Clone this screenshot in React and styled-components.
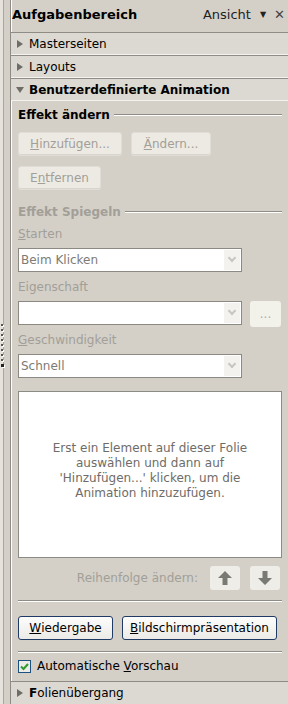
import styled, { createGlobalStyle } from "styled-components"

const GlobalStyle = createGlobalStyle`
  html, body {
    margin: 0;
    padding: 0;
    background: #d4d0c8;
  }
  body {
    font-family: "DejaVu Sans", sans-serif;
    font-size: 12px;
    color: #000;
  }
`

export default function App() {
  return (
    <Frame>
      <GlobalStyle />
      <Grip>
        <Dots>
          {Array.from({ length: 9 }).map((_, i) => <Dot key={i} />)}
        </Dots>
      </Grip>
      <Pane>
        <TitleBar>
          <h1>Aufgabenbereich</h1>
          <span>Ansicht</span>
          <DropArrow>▼</DropArrow>
          <Close>✕</Close>
        </TitleBar>

        <SectionRow><Triangle /><span>Masterseiten</span></SectionRow>
        <SectionRow><Triangle /><span>Layouts</span></SectionRow>
        <SectionRow bold><Triangle open /><span>Benutzerdefinierte Animation</span></SectionRow>

        <Body>
          <GroupTitle below={9}>Effekt ändern</GroupTitle>
          <ButtonRow below={10}>
            <FlatButton w={104}><u>H</u>inzufügen...</FlatButton>
            <FlatButton w={80}><u>Ä</u>ndern...</FlatButton>
          </ButtonRow>
          <ButtonRow below={14}>
            <FlatButton w={83}>E<u>n</u>tfernen</FlatButton>
          </ButtonRow>

          <GroupTitle disabled below={7}>Effekt Spiegeln</GroupTitle>
          <FieldLabel><u>S</u>tarten</FieldLabel>
          <SelectRow below={8}>
            <Select>Beim Klicken<Chevron /></Select>
          </SelectRow>
          <FieldLabel>Eigenschaft</FieldLabel>
          <SelectRow below={6}>
            <Select>&nbsp;<Chevron /></Select>
            <DotsButton>...</DotsButton>
          </SelectRow>
          <FieldLabel><u>G</u>eschwindigkeit</FieldLabel>
          <SelectRow below={13}>
            <Select>Schnell<Chevron /></Select>
          </SelectRow>

          <ListBox>
            <p>Erst ein Element auf dieser Folie auswählen und dann auf 'Hinzufügen...' klicken, um die Animation hinzuzufügen.</p>
          </ListBox>

          <OrderRow>
            <span>Reihenfolge ändern:</span>
            <ArrowButton>
              <svg width="16" height="16" viewBox="0 0 16 16">
                <path d="M8 1 L15 8 L10.5 8 L10.5 15 L5.5 15 L5.5 8 L1 8 Z" fill="#7a7a74" />
              </svg>
            </ArrowButton>
            <ArrowButton>
              <svg width="16" height="16" viewBox="0 0 16 16">
                <path d="M8 15 L15 8 L10.5 8 L10.5 1 L5.5 1 L5.5 8 L1 8 Z" fill="#7a7a74" />
              </svg>
            </ArrowButton>
          </OrderRow>

          <Separator below={14} />
          <ButtonRow below={11}>
            <XpButton w={95}><u>W</u>iedergabe</XpButton>
            <XpButton w={155}><u>B</u>ildschirmpräsentation</XpButton>
          </ButtonRow>
          <Separator below={6} />

          <CheckRow>
            <CheckBox>
              <svg width="9" height="9" viewBox="0 0 9 9">
                <path d="M1 4.5 L3.5 7 L8 2" stroke="#2f9a2f" strokeWidth="2" fill="none" />
              </svg>
            </CheckBox>
            <span>Automatische <u>V</u>orschau</span>
          </CheckRow>
        </Body>

        <SectionRow last><Triangle /><span><b>F</b>olienübergang</span></SectionRow>
      </Pane>
    </Frame>
  )
}

const Frame = styled.div`
  display: flex;
  height: 704px;
  width: 288px;
  overflow: hidden;
`
const Grip = styled.div`
  width: 10px;
  border-right: 1px solid #8d8b86;
  box-shadow: inset 3px 0 0 #e6e3dd, inset 4px 0 0 #a9a69f;
  display: flex;
  align-items: center;
  flex-shrink: 0;
`
const Dots = styled.div`
  display: flex;
  flex-direction: column;
  gap: 3px;
  margin-left: 1px;
  margin-top: -14px;
`
const Dot = styled.div`
  width: 2px;
  height: 2px;
  background: #555;
  box-shadow: 1px 1px 0 #fff;
  &:last-child {
    width: 3px;
    height: 3px;
    background: #222;
  }
`
const Pane = styled.div`
  flex: 1;
  display: flex;
  flex-direction: column;
  box-shadow: inset 1px 0 0 #fff;
  min-width: 0;
  overflow: hidden;
  & > * {
    flex-shrink: 0;
  }
`
const TitleBar = styled.div`
  height: 32px;
  display: flex;
  align-items: center;
  padding: 0 3px 4px 1px;
  box-sizing: border-box;
  h1 {
    margin: 0;
    flex: 1;
    font-size: 13px;
    font-weight: bold;
  }
  span {
    font-size: 13px;
    color: #222;
  }
`
const DropArrow = styled.div`
  font-size: 8px;
  margin: 0 8px 0 9px;
  color: #222;
`
const Close = styled.div`
  font-size: 13px;
  font-weight: bold;
  color: #444;
`
const SectionRow = styled.div`
  display: flex;
  align-items: center;
  gap: 5px;
  padding-left: 5px;
  background: #dcd9d2;
  border-top: 1px solid #8f8c86;
  border-bottom: ${(p) => (p.last ? "none" : "1px solid #f4f2ee")};
  box-sizing: ${(p) => (p.last ? "border-box" : "content-box")};
  font-weight: ${(p) => (p.bold ? "bold" : "normal")};
  height: ${(p) => (p.last ? "23px" : "21px")};
`
const Triangle = styled.span`
  width: 0;
  height: 0;
  ${(p) =>
    p.open
      ? `border-left: 4px solid transparent; border-right: 4px solid transparent; border-top: 6px solid #6f6d68; margin-top: 1px;`
      : `border-top: 4px solid transparent; border-bottom: 4px solid transparent; border-left: 6px solid #6f6d68; margin: 0 1px;`}
`
const Body = styled.div`
  flex: 1;
  display: flex;
  flex-direction: column;
  padding: 6px 6px 0 7px;
  & > * {
    flex-shrink: 0;
  }
`
const GroupTitle = styled.div`
  display: flex;
  align-items: center;
  gap: 4px;
  font-weight: bold;
  height: 16px;
  margin-bottom: ${(p) => p.below}px;
  color: ${(p) => (p.disabled ? "#a29f98" : "#000")};
  &::after {
    content: "";
    flex: 1;
    height: 1px;
    background: #8f8c86;
    border-bottom: 1px solid #fff;
  }
`
const ButtonRow = styled.div`
  display: flex;
  gap: 9px;
  margin-bottom: ${(p) => p.below}px;
`
const FlatButton = styled.div`
  width: ${(p) => p.w}px;
  height: 24px;
  box-sizing: border-box;
  display: flex;
  align-items: center;
  justify-content: center;
  background: #edeae4;
  border-radius: 3px;
  border: 1px solid #e0ddd6;
  box-shadow: inset 0 -1px 0 #d8d5ce;
  color: #a29f98;
`
const FieldLabel = styled.div`
  color: #a29f98;
  height: 14px;
  line-height: 14px;
  margin-bottom: 7px;
`
const SelectRow = styled.div`
  display: flex;
  align-items: flex-start;
  gap: 8px;
  margin-bottom: ${(p) => p.below}px;
`
const Select = styled.div`
  width: 224px;
  height: 24px;
  box-sizing: border-box;
  border: 1px solid #8b8982;
  background: #fff;
  display: flex;
  align-items: center;
  padding-left: 2px;
  color: #7d7b76;
  position: relative;
`
const Chevron = styled.span`
  position: absolute;
  right: 1px;
  top: 1px;
  bottom: 1px;
  width: 16px;
  background: #f3f2ee;
  &::after {
    content: "";
    position: absolute;
    left: 5px;
    top: 5px;
    width: 4px;
    height: 4px;
    border-right: 2px solid #c8c6c0;
    border-bottom: 2px solid #c8c6c0;
    transform: rotate(45deg);
  }
`
const DotsButton = styled.div`
  width: 31px;
  height: 26px;
  background: #f2f1ea;
  border-radius: 3px;
  color: #b0ada6;
  display: flex;
  align-items: center;
  justify-content: center;
`
const ListBox = styled.div`
  height: 167px;
  box-sizing: border-box;
  background: #fff;
  border: 1px solid #8d8b86;
  display: flex;
  align-items: center;
  justify-content: center;
  p {
    margin: 0;
    padding: 0 20px 8px;
    text-align: center;
    color: #6e6c68;
    line-height: 15px;
  }
`
const OrderRow = styled.div`
  display: flex;
  align-items: center;
  justify-content: flex-end;
  gap: 10px;
  margin: 8px 2px 10px 0;
  span {
    color: #a29f98;
    margin-right: 2px;
  }
`
const ArrowButton = styled.div`
  width: 30px;
  height: 24px;
  background: #efede7;
  border-radius: 3px;
  display: flex;
  align-items: center;
  justify-content: center;
`
const Separator = styled.div`
  height: 1px;
  background: #8f8c86;
  border-bottom: 1px solid #fff;
  margin-bottom: ${(p) => p.below}px;
`
const XpButton = styled.div`
  width: ${(p) => p.w}px;
  height: 24px;
  box-sizing: border-box;
  display: flex;
  align-items: center;
  justify-content: center;
  background: linear-gradient(#fdfdfc, #ebeae6);
  border: 1px solid #203a66;
  border-radius: 3px;
  color: #000;
`
const CheckRow = styled.div`
  display: flex;
  align-items: center;
  gap: 6px;
  height: 14px;
`
const CheckBox = styled.div`
  width: 13px;
  height: 13px;
  box-sizing: border-box;
  border: 1px solid #1c5180;
  background: #ecebe6;
  display: flex;
  align-items: center;
  justify-content: center;
`
